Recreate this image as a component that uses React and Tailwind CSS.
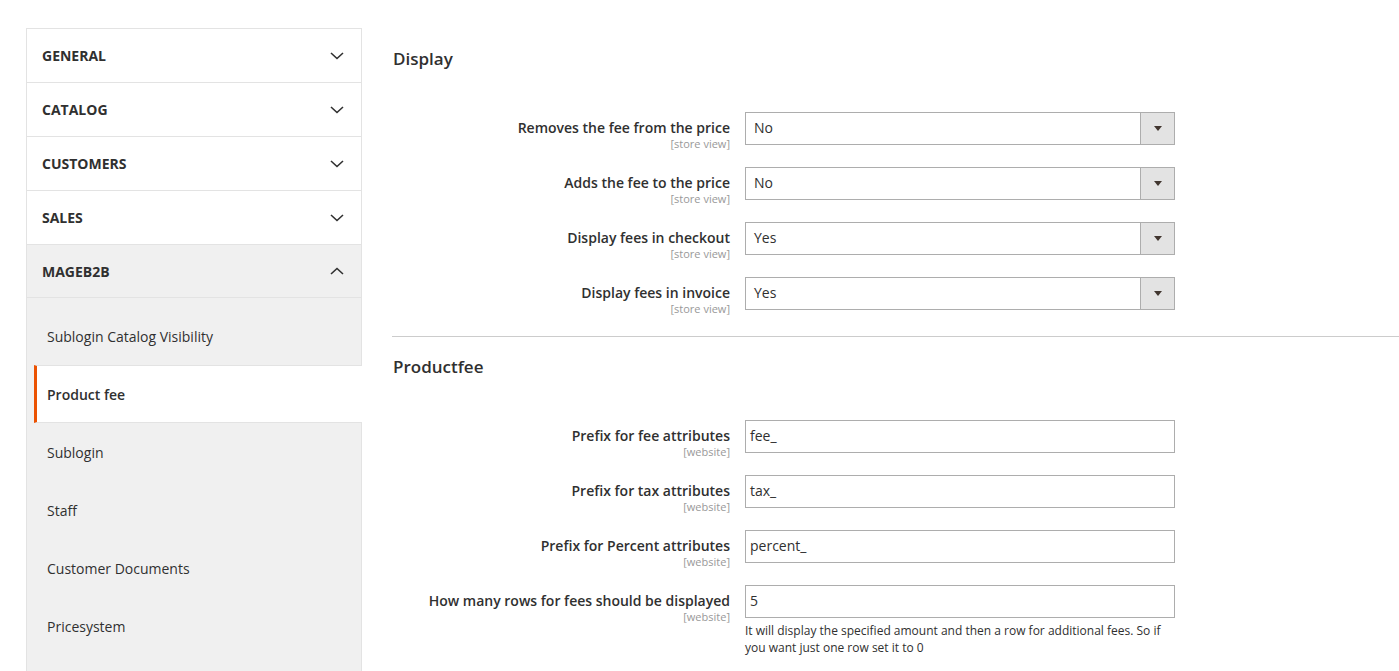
import React from 'react'

const tabs = ['General', 'Catalog', 'Customers', 'Sales']

const subItems = [
  { name: 'Sublogin Catalog Visibility' },
  { name: 'Product fee', active: true },
  { name: 'Sublogin' },
  { name: 'Staff' },
  { name: 'Customer Documents' },
  { name: 'Pricesystem' },
]

const displayRows = [
  { label: 'Removes the fee from the price', value: 'No' },
  { label: 'Adds the fee to the price', value: 'No' },
  { label: 'Display fees in checkout', value: 'Yes' },
  { label: 'Display fees in invoice', value: 'Yes' },
]

const feeRows = [
  { label: 'Prefix for fee attributes', value: 'fee_' },
  { label: 'Prefix for tax attributes', value: 'tax_' },
  { label: 'Prefix for Percent attributes', value: 'percent_' },
  {
    label: 'How many rows for fees should be displayed',
    value: '5',
    note: 'It will display the specified amount and then a row for additional fees. So if you want just one row set it to 0',
  },
]

function Chevron({ up }) {
  return (
    <svg width="14" height="8" viewBox="0 0 14 8" fill="none" stroke="#303030" strokeWidth="1.6">
      {up ? <polyline points="1,7 7,1.5 13,7" /> : <polyline points="1,1 7,6.5 13,1" />}
    </svg>
  )
}

function Row({ label, scope, children, note }) {
  return (
    <div className="flex mb-[22px]">
      <div className="w-[337px] h-[33px] shrink-0 pt-[7px] text-right">
        <div className="text-[14px] leading-[18px] font-semibold text-[#303030]">{label}</div>
        <div className="text-[11px] leading-[13px] text-[#999999]">[{scope}]</div>
      </div>
      <div className="ml-[15px] w-[430px]">
        {children}
        {note && <p className="mt-[4px] text-[12px] leading-[17px] text-[#303030]">{note}</p>}
      </div>
    </div>
  )
}

function Select({ value }) {
  return (
    <div className="flex h-[33px] border border-[#adadad] bg-white">
      <div className="flex-1 pl-[8px] text-[14px] leading-[30px] text-[#303030]">{value}</div>
      <div className="w-[34px] border-l border-[#adadad] bg-[#e3e3e3] flex items-center justify-center">
        <div className="w-0 h-0 border-l-[4px] border-r-[4px] border-t-[5px] border-l-transparent border-r-transparent border-t-[#41362f]" />
      </div>
    </div>
  )
}

function TextInput({ value }) {
  return (
    <div className="h-[33px] border border-[#adadad] bg-white pl-[4px] text-[14px] leading-[30px] text-[#303030]">
      {value}
    </div>
  )
}

export default function App() {
  return (
    <div className="flex h-[671px] bg-white overflow-hidden" style={{ fontFamily: '"Open Sans", sans-serif' }}>
      <aside className="ml-[26px] mt-[28px] w-[336px] shrink-0 border-l border-r border-t border-[#e3e3e3] flex flex-col">
        {tabs.map((t) => (
          <div key={t} className="h-[54px] border-b border-[#e3e3e3] flex items-center justify-between pl-[15px] pr-[17px]">
            <span className="text-[14px] font-bold uppercase text-[#303030]">{t}</span>
            <Chevron />
          </div>
        ))}
        <div className="h-[53px] border-b border-[#e3e3e3] bg-[#f0f0f0] flex items-center justify-between pl-[15px] pr-[17px]">
          <span className="text-[14px] font-bold uppercase text-[#303030]">Mageb2b</span>
          <Chevron up />
        </div>
        <div className="flex-1 bg-[#f0f0f0] pt-[9px]">
          {subItems.map((s) =>
            s.active ? (
              <div key={s.name} className="relative ml-[7px] -mr-px h-[58px] bg-white border-l-[3px] border-[#eb5202] border-y border-y-[#e3e3e3] pl-[10px] flex items-center text-[14px] font-semibold text-[#303030]">
                {s.name}
              </div>
            ) : (
              <div key={s.name} className="h-[58px] pl-[20px] flex items-center text-[14px] text-[#303030]">
                {s.name}
              </div>
            )
          )}
        </div>
      </aside>

      <main className="flex-1 ml-[30px] pt-[47px]">
        <div className="pl-px">
          <h2 className="text-[17px] leading-[24px] font-semibold text-[#303030]">Display</h2>
          <div className="mt-[41px]">
            {displayRows.map((r) => (
              <Row key={r.label} label={r.label} scope="store view">
                <Select value={r.value} />
              </Row>
            ))}
          </div>
        </div>
        <div className="mt-[26px] border-t border-[#cccccc]" />
        <div className="pl-px pt-[18px]">
          <h2 className="text-[17px] leading-[24px] font-semibold text-[#303030]">Productfee</h2>
          <div className="mt-[41px]">
            {feeRows.map((r) => (
              <Row key={r.label} label={r.label} scope="website" note={r.note}>
                <TextInput value={r.value} />
              </Row>
            ))}
          </div>
        </div>
      </main>
    </div>
  )
}
